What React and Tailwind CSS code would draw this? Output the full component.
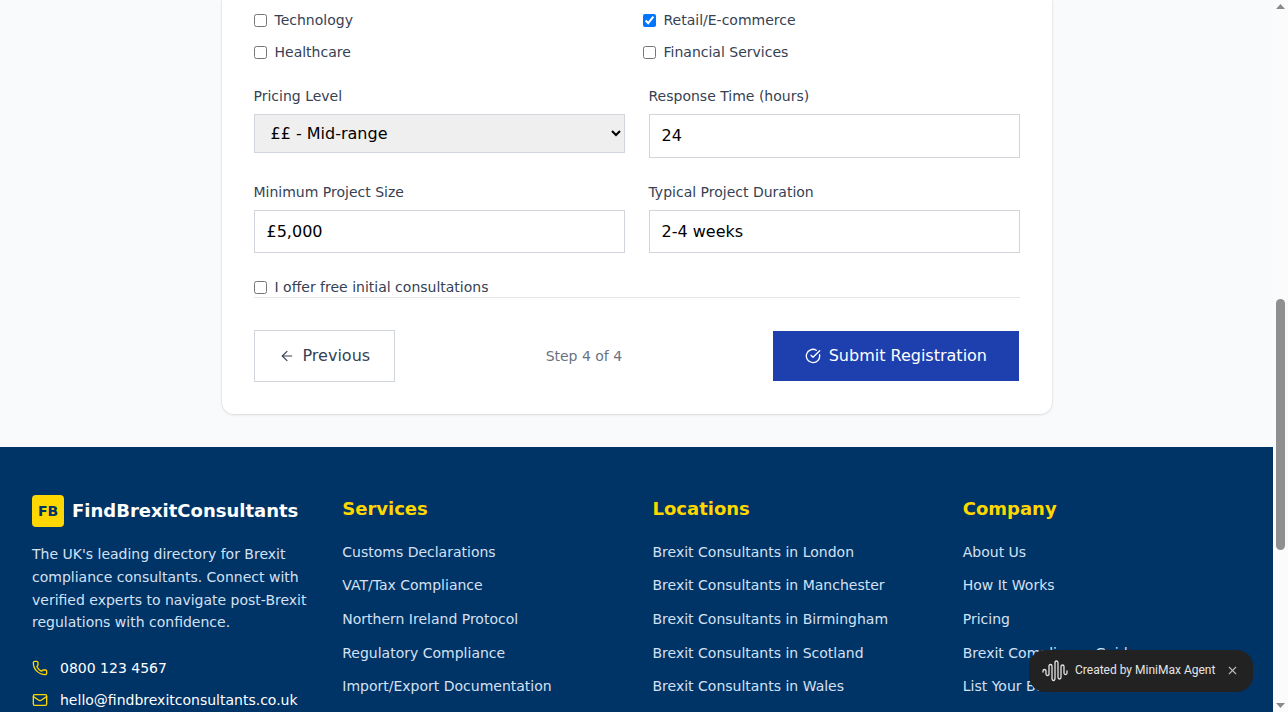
import React from 'react';
import { ArrowLeft, CircleCheckBig, Mail, Phone, X } from 'lucide-react';

const columns = [
  {
    title: 'Services',
    links: ['Customs Declarations', 'VAT/Tax Compliance', 'Northern Ireland Protocol', 'Regulatory Compliance', 'Import/Export Documentation'],
  },
  {
    title: 'Locations',
    links: ['Brexit Consultants in London', 'Brexit Consultants in Manchester', 'Brexit Consultants in Birmingham', 'Brexit Consultants in Scotland', 'Brexit Consultants in Wales'],
  },
  {
    title: 'Company',
    links: ['About Us', 'How It Works', 'Pricing', 'Brexit Compliance Guide', 'List Your Business'],
  },
];

const Check = ({ label, checked }) => (
  <label className="flex items-center gap-2 text-sm text-gray-700 h-5">
    <input type="checkbox" defaultChecked={checked} className="m-0 w-[13px] h-[13px]" />
    <span>{label}</span>
  </label>
);

const Field = ({ label, value }) => (
  <div>
    <label className="block text-sm text-gray-700 mb-2 leading-5">{label}</label>
    <input
      readOnly
      value={value}
      className="w-full h-[43.6px] px-3 border border-gray-300 bg-white text-black text-base outline-none"
    />
  </div>
);

const Waves = () => (
  <svg width="26" height="22" viewBox="0 0 26 22" fill="none" stroke="#e5e5e5" strokeWidth="1.3" strokeLinecap="round" strokeLinejoin="round" className="-mt-px">
    <path d="M1 12v-1q0-1.5 1.5-1.5T4 11v3q0 1.5 1.5 1.5T7 14V6q0-1.5 1.5-1.5T10 6v12q0 2.5 1.5 2.5T13 18V3q0-2 1.5-2T16 3v14q0 2 1.5 2T19 17V6.500q0-1.500 1.500-1.500T22 6.500V13q0 1.500 1.500 1.500T25 13v-2" />
  </svg>
);

export default function App() {
  return (
    <div className="h-[712px] overflow-hidden flex bg-[#f8fafc] text-gray-700" style={{ fontFamily: '"DejaVu Sans", sans-serif' }}>
      <div className="relative flex-1 min-w-0 overflow-hidden">
        <main className="w-[830px] mx-auto mb-[33px] bg-white rounded-b-xl shadow-[0_1px_3px_rgba(0,0,0,0.1),0_0_0_1px_rgba(0,0,0,0.03)] px-8 pb-8 pt-[10px]">
          <div className="grid grid-cols-2 gap-x-3 gap-y-3">
            <Check label="Technology" />
            <Check label="Retail/E-commerce" checked />
            <Check label="Healthcare" />
            <Check label="Financial Services" />
          </div>

          <div className="grid grid-cols-2 gap-x-6 gap-y-6 mt-[24px]">
            <div>
              <label className="block text-sm text-gray-700 mb-2 leading-5">Pricing Level</label>
              <select className="w-full h-[39px] px-3 border border-gray-300 bg-[#efefef] text-black text-base" defaultValue="mid">
                <option value="mid">££ - Mid-range</option>
              </select>
            </div>
            <Field label="Response Time (hours)" value="24" />
            <Field label="Minimum Project Size" value="£5,000" />
            <Field label="Typical Project Duration" value="2-4 weeks" />
          </div>

          <div className="mt-6 border-b border-gray-200">
            <Check label="I offer free initial consultations" />
          </div>

          <div className="flex items-center justify-between mt-8">
            <button className="flex items-center gap-2 h-[52px] px-6 border border-gray-300 bg-white text-gray-700 text-base">
              <ArrowLeft size={16} strokeWidth={1.7} />
              Previous
            </button>
            <span className="text-sm text-gray-500">Step 4 of 4</span>
            <button className="flex items-center gap-2 h-[50px] px-8 mr-[0.5px] bg-[#1e40af] text-white text-base">
              <CircleCheckBig size={16} strokeWidth={2} />
              Submit Registration
            </button>
          </div>
        </main>

        <footer className="bg-[#003366] px-8 pt-12 pb-12">
          <div className="grid grid-cols-4 gap-8">
            <div>
              <div className="flex items-center gap-2">
                <div className="w-8 h-8 rounded bg-[#ffd700] text-[#003366] font-bold text-sm flex items-center justify-center">FB</div>
                <span className="text-lg font-bold text-white">FindBrexitConsultants</span>
              </div>
              <p className="mt-4 text-sm leading-relaxed text-[#d4e1f4]">
                The UK's leading directory for Brexit compliance consultants. Connect with verified experts to navigate post-Brexit regulations with confidence.
              </p>
              <div className="mt-6 flex flex-col gap-3 text-sm text-white">
                <div className="flex items-center gap-3 h-5">
                  <Phone size={16} className="text-[#ffd700]" />
                  0800 123 4567
                </div>
                <div className="flex items-center gap-3 h-5">
                  <Mail size={16} className="text-[#ffd700]" />
                  hello@findbrexitconsultants.co.uk
                </div>
              </div>
            </div>

            {columns.map((col) => (
              <div key={col.title}>
                <h3 className="text-lg font-bold text-[#ffd700] leading-7">{col.title}</h3>
                <ul className="mt-[18.6px] flex flex-col gap-[13.6px] text-sm text-[#d4e1f4]">
                  {col.links.map((link) => (
                    <li key={link} className="leading-5">{link}</li>
                  ))}
                </ul>
              </div>
            ))}
          </div>
        </footer>

        <div className="absolute left-[1029px] top-[650px] w-[224px] h-[42px] rounded-2xl bg-[#222222] flex items-center pl-[13px] text-white" style={{ fontFamily: 'Roboto, sans-serif' }}>
          <Waves />
          <span className="ml-[7px] text-xs text-[#e5e5e5] -mt-[2px]">Created by MiniMax Agent</span>
          <X size={13} strokeWidth={2} className="ml-[10.500px] -mt-[2px] text-[#bbbbbb]" />
        </div>
      </div>

      <div className="w-[15px] shrink-0 bg-[#fbfbfb] flex flex-col items-center justify-between relative">
        <svg width="9" height="5" viewBox="0 0 9 5" className="mt-[4px]"><path d="M4.500 0L9 5H0z" fill="#8a8a8a" /></svg>
        <div className="absolute top-[299px] left-[3px] w-[9px] h-[251px] rounded-full bg-[#8f8f8f]" />
        <svg width="9" height="5" viewBox="0 0 9 5" className="mb-[4px]"><path d="M4.500 5L9 0H0z" fill="#8a8a8a" /></svg>
      </div>
    </div>
  );
}
